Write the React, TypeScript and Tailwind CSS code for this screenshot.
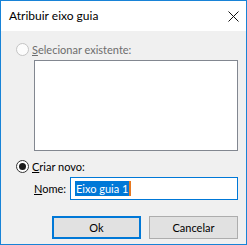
import React from 'react';

export default function App() {
  const font = { fontFamily: 'Lato, "Liberation Sans", sans-serif' };

  return (
    <div className="w-[247px] h-[245px] border border-[#1883d7] bg-[#f0f0f0] flex flex-col text-[11px] leading-none text-black" style={font}>
      {/* barra de título */}
      <div className="h-[30px] bg-white flex items-center justify-between pl-[8px] pr-[7px]">
        <span className="text-[12px]">Atribuir eixo guia</span>
        <svg width="11" height="11" viewBox="0 0 11 11">
          <path d="M0.5 0.5 L10.5 10.5 M10.5 0.5 L0.5 10.5" stroke="#111" strokeWidth="1" />
        </svg>
      </div>

      {/* corpo */}
      <div className="flex-1 flex flex-col pr-[8px]">
        {/* selecionar existente */}
        <div className="h-[18px] mt-[9px] ml-[15px] flex items-center gap-[3px] text-[#6d6d6d]">
          <span className="w-[13px] h-[13px] rounded-full border border-[#c4c4c4] bg-[#fcfcfc]"></span>
          <span><span className="underline">S</span>elecionar existente:</span>
        </div>
        <div className="ml-[33px] mt-[2px] h-[91px] border border-[#828790] bg-white"></div>

        {/* criar novo */}
        <div className="h-[18px] mt-[6px] ml-[15px] flex items-center gap-[3px]">
          <span className="w-[13px] h-[13px] rounded-full border border-[#333] bg-white flex items-center justify-center">
            <span className="w-[7px] h-[7px] rounded-full bg-[#1a1a1a]"></span>
          </span>
          <span><span className="underline">C</span>riar novo:</span>
        </div>

        <div className="mt-[2px] ml-[33px] flex items-center">
          <span className="w-[36px]"><span className="underline">N</span>ome:</span>
          <div className="flex-1 h-[23px] border border-[#0078d7] bg-white flex items-center pl-[4px]">
            <span className="bg-[#0078d7] text-white leading-[15px] h-[15px] px-[1px]">Eixo guia 1</span>
            <span className="w-[2px] h-[15px] bg-[#e8781f]"></span>
          </div>
        </div>

        {/* botões */}
        <div className="mt-[16px] flex justify-end gap-[8px]">
          <button className="w-[89px] h-[23px] border-2 border-[#0078d7] bg-[#e1e1e1] text-[11px]">Ok</button>
          <button className="w-[89px] h-[23px] border border-[#adadad] bg-[#e1e1e1] text-[11px]">Cancelar</button>
        </div>
      </div>
    </div>
  );
}
